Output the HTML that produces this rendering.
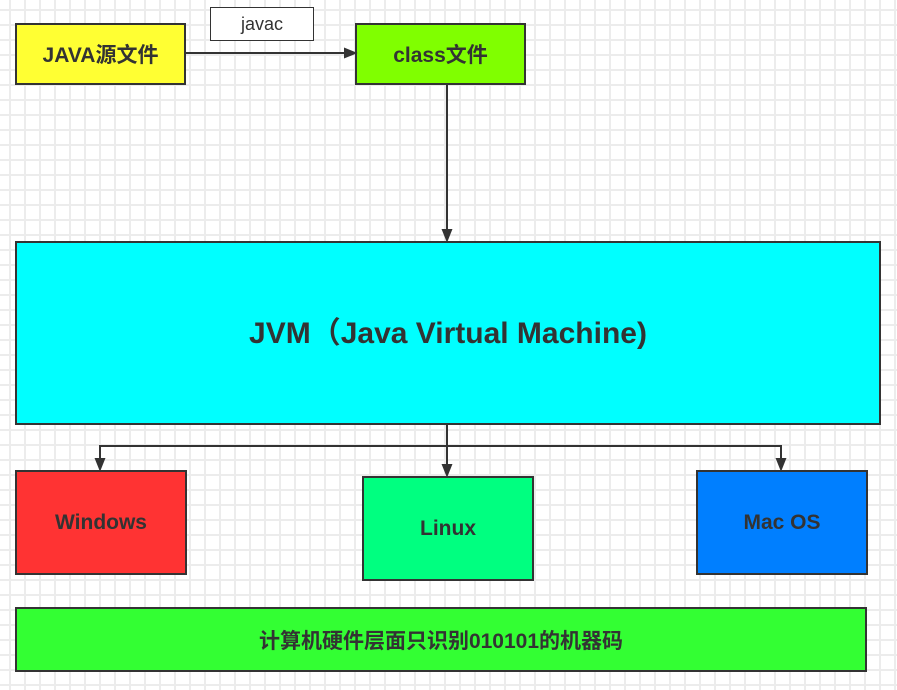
<!DOCTYPE html><html><head><style>
body{margin:0;width:897px;height:690px;position:relative;overflow:hidden;background-color:#fff;
background-image:linear-gradient(#ececec 2px,transparent 2px),linear-gradient(90deg,#ececec 2px,transparent 2px);
background-size:15px 15px;background-position:9px 9px;font-family:"Liberation Sans","Noto Sans CJK SC",sans-serif;}
.b{position:absolute;box-sizing:border-box;border:2px solid #333;display:flex;align-items:center;justify-content:center;font-weight:bold;color:#333;font-size:21px}
</style></head><body>
<div class="b" style="left:15px;top:23px;width:171px;height:62px;background:#ffff33">JAVA源文件</div>
<div class="b" style="left:210px;top:7px;width:104px;height:34px;background:#fff;border-width:1.5px;font-weight:normal;font-size:18px">javac</div>
<div class="b" style="left:355px;top:23px;width:171px;height:62px;background:#80ff00">class文件</div>
<div class="b" style="left:15px;top:241px;width:866px;height:184px;background:#00ffff;font-size:30px;padding-bottom:6px">JVM（Java Virtual Machine)</div>
<div class="b" style="left:15px;top:470px;width:172px;height:105px;background:#ff3333">Windows</div>
<div class="b" style="left:362px;top:476px;width:172px;height:105px;background:#00ff80">Linux</div>
<div class="b" style="left:696px;top:470px;width:172px;height:105px;background:#007fff">Mac OS</div>
<div class="b" style="left:15px;top:607px;width:852px;height:65px;background:#33ff33">计算机硬件层面只识别010101的机器码</div>
<svg width="897" height="690" style="position:absolute;left:0;top:0" fill="none" stroke="#333" stroke-width="2">
<path d="M186 53H345"/><path d="M355 53l-10-4v8z" fill="#333"/>
<path d="M447 85V230"/><path d="M447 240l-4-10h8z" fill="#333"/>
<path d="M447 425V466M100 460V446H781V460"/>
<path d="M100 469l-4-10h8zM447 475l-4-10h8zM781 469l-4-10h8z" fill="#333"/>
</svg>
</body></html>
